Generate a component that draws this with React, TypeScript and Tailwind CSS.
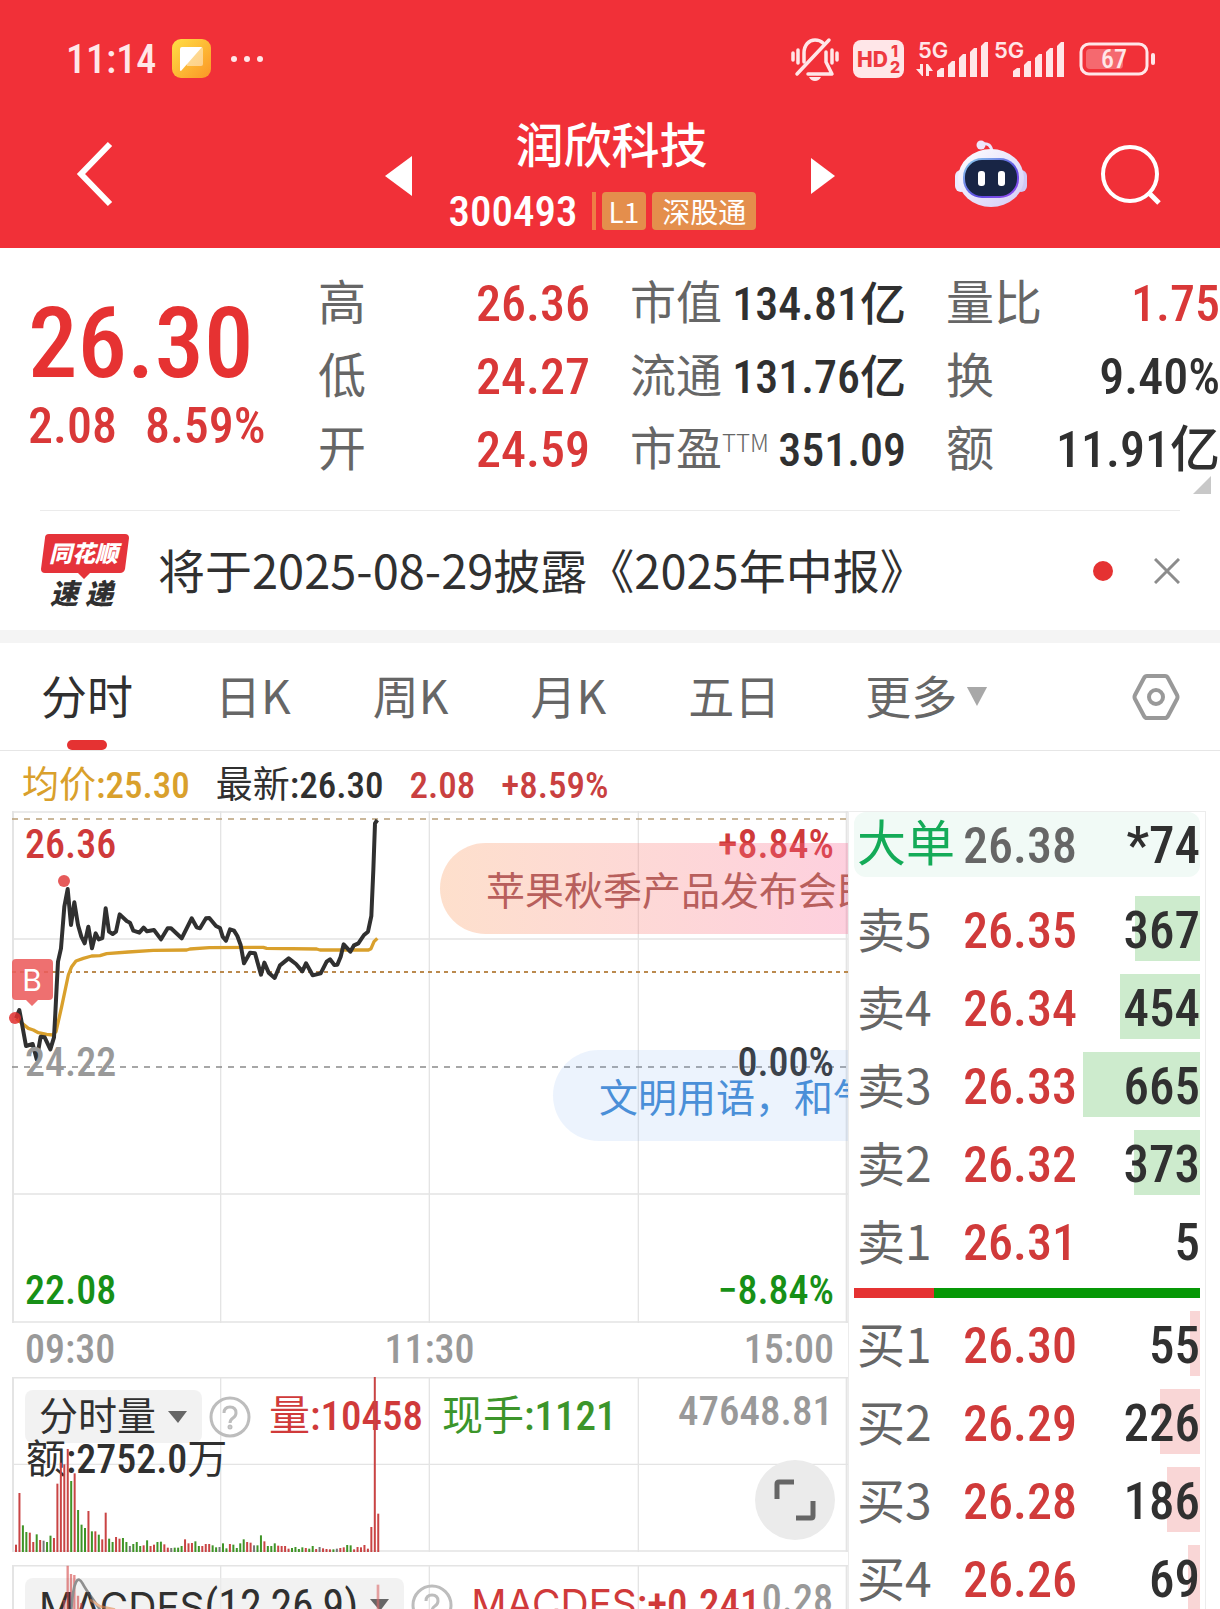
import { useState, type ReactNode } from "react";

type Tone = "red" | "dark";

const QUOTE_LEFT: { label: string; value: string }[] = [
  { label: "高", value: "26.36" },
  { label: "低", value: "24.27" },
  { label: "开", value: "24.59" },
];

const QUOTE_MID: { label: string; sup?: string; value: string }[] = [
  { label: "市值", value: "134.81亿" },
  { label: "流通", value: "131.76亿" },
  { label: "市盈", sup: "TTM", value: "351.09" },
];

const QUOTE_RIGHT: { label: string; value: string; tone: Tone }[] = [
  { label: "量比", value: "1.75", tone: "red" },
  { label: "换", value: "9.40%", tone: "dark" },
  { label: "额", value: "11.91亿", tone: "dark" },
];

const TABS = ["分时", "日K", "周K", "月K", "五日"];

const ASKS = [
  { label: "卖5", price: "26.35", volume: 367 },
  { label: "卖4", price: "26.34", volume: 454 },
  { label: "卖3", price: "26.33", volume: 665 },
  { label: "卖2", price: "26.32", volume: 373 },
  { label: "卖1", price: "26.31", volume: 5 },
];

const BIDS = [
  { label: "买1", price: "26.30", volume: 55 },
  { label: "买2", price: "26.29", volume: 226 },
  { label: "买3", price: "26.28", volume: 186 },
  { label: "买4", price: "26.26", volume: 69 },
];

const MAX_VOLUME = 665;

const PRICE_LINE =
  "48,655 58,630 66,672 78,738 98,732 110,778 122,710 134,712 151,748 162,712 166,640 170,560 174,485 183,445 193,320 203,267 213,375 223,307 234,375 244,410 254,430 265,380 276,445 287,400 296,418 307,414 317,325 327,395 338,402 348,395 359,343 380,363 390,368 400,392 418,398 431,383 441,394 462,390 483,418 503,385 513,385 545,415 575,355 590,382 600,385 618,355 628,354 648,378 660,384 668,410 678,422 690,388 702,392 712,408 722,435 732,490 750,458 765,460 783,524 793,488 806,518 824,534 840,496 866,475 888,492 907,514 918,490 938,526 962,520 980,485 990,478 1003,495 1012,494 1022,470 1031,433 1051,455 1062,436 1075,430 1092,405 1104,395 1114,348 1120,210 1125,70 1132,60";

const AVERAGE_LINE =
  "48,655 85,685 100,690 115,698 140,703 158,705 168,695 185,620 205,525 215,500 228,483 250,475 275,468 300,467 320,461 385,456 460,451 560,450 570,447 628,443 790,442 800,445 950,447 960,450 1105,450 1113,446 1122,425 1132,415";

// altura + direção de cada minuto: r = alta, g = baixa, n = estável
const VOLUME =
  "22r 177r 80g 60g 58r 30r 53g 36r 34n 30g 49g 42r 205r 268r 263r 309r 213g 236r 126g 82g 72g 123r 62g 62r 52g 38r 118r 40g 30g 45r 40r 42g 30g 18n 24g 30g 18g 20r 35g 18r 22r 30g 31g 23r 13r 12n 13g 13g 18g 38r 26r 27r 32g 18g 18r 24r 24r 20g 14g 15n 26g 11g 24r 22g 12g 26g 38g 30r 28r 20n 20g 50g 32r 18g 18g 26g 19r 18r 18r 10r 12g 15g 9g 14g 12r 10g 18g 9r 15n 11r 9r 8r 8g 10n 12r 14r 21g 20g 8r 15r 14r 21r 10r 75r 525r 115r".split(" ");

const BAR_COLORS: Record<string, string> = { r: "#c94444", g: "#3f9427", n: "#777777" };

const NUM = 'font-["Roboto_Condensed","Noto_Sans_CJK_SC",Roboto,sans-serif]';

function StatusBar() {
  return (
    <div className="flex h-[118px] items-center pl-[66px] pr-[64px] text-[#ffe6e8]">
      <span className='pt-[2px] font-["Roboto_Condensed","Noto_Sans_CJK_SC",sans-serif] text-[40px] font-medium leading-none'>
        11:14
      </span>
      <svg className="ml-[16px] h-[40px] w-[40px]" viewBox="0 0 40 40" aria-hidden="true">
        <defs>
          <linearGradient id="note" x1="0" y1="0" x2="1" y2="1">
            <stop offset="0" stopColor="#ffdf45" />
            <stop offset="1" stopColor="#fb9526" />
          </linearGradient>
        </defs>
        <rect width="39" height="39" rx="9" fill="url(#note)" />
        <path d="M10 8h19a2 2 0 0 1 2 2v15a2 2 0 0 1-2 2H15z" fill="#fff" opacity=".45" />
        <path d="M8 10a2 2 0 0 1 2-2h20L9 32q-1 0-1-1z" fill="#fff" />
      </svg>
      <svg className="ml-[18px] h-[8px] w-[34px]" viewBox="0 0 34 8" fill="currentColor" aria-hidden="true">
        <circle cx="4" cy="4" r="3" />
        <circle cx="17" cy="4" r="3" />
        <circle cx="30" cy="4" r="3" />
      </svg>

      <div className="ml-auto flex items-center">
        <svg
          className="h-[46px] w-[48px]"
          viewBox="0 -2 48 46"
          fill="none"
          stroke="currentColor"
          strokeWidth="3.500"
          strokeLinecap="round"
          aria-hidden="true"
        >
          <path d="M2 15v7M7 12v13M41 12v13M46 15v7" />
          <path d="M13 24v-9c0-8 5-13 11-13 3 0 6 1 8 3M35 14v10l6 12H17" strokeLinejoin="round" />
          <path d="M38 2L6 36" />
          <path d="M18 39h12q-2 4-6 4t-6-4z" fill="currentColor" stroke="none" />
        </svg>
        <svg className="ml-[14px] h-[38px] w-[51px]" viewBox="0 0 51 38" aria-hidden="true">
          <rect width="51" height="38" rx="8" fill="currentColor" />
          <g fill="#ee3a41" fontFamily="Inter, sans-serif" fontWeight="800">
            <text x="4" y="27" fontSize="21">HD</text>
            <text x="38" y="17" fontSize="16">1</text>
            <text x="37" y="33" fontSize="16">2</text>
          </g>
        </svg>
        <Signal className="ml-[12px]" transfer />
        <Signal className="ml-[3px]" />
        <svg className="ml-[14px] h-[34px] w-[77px]" viewBox="0 0 77 34" aria-hidden="true">
          <rect x="2" y="2" width="66" height="30" rx="8" fill="none" stroke="currentColor" strokeWidth="3" />
          <rect x="7" y="7" width="37" height="20" rx="4" fill="#fff" opacity=".28" />
          <rect x="72" y="11" width="4" height="12" rx="2" fill="currentColor" />
          <text
            x="35"
            y="26"
            fontSize="26"
            fontWeight="500"
            textAnchor="middle"
            fill="currentColor"
            fontFamily="Roboto Condensed, sans-serif"
          >
            67
          </text>
        </svg>
      </div>
    </div>
  );
}

function Signal({ className, transfer }: { className: string; transfer?: boolean }) {
  return (
    <svg className={`h-[42px] w-[73px] ${className}`} viewBox="0 0 73 42" fill="currentColor" aria-hidden="true">
      <text x="2" y="20" fontSize="22" fontWeight="600" fontFamily="Inter, sans-serif">
        5G
      </text>
      {transfer && <path d="M4 26h3v12H6L0 31h4zM10 26h2l5 7h-4v5h-3z" />}
      <path d="M21 39v-6l4-3h3v9zM32 39V27l4-4h3v16zM43 39V20l4-4h3v23zM54 39V14l4-4h3v29zM65 39V8l4-4h3v35z" />
    </svg>
  );
}

function Robot() {
  return (
    <svg className="h-[70px] w-[74px]" viewBox="0 0 74 70" aria-hidden="true">
      <defs>
        <linearGradient id="shell" x1="0" y1="0" x2="1" y2="1">
          <stop offset="0" stopColor="#ffffff" />
          <stop offset="1" stopColor="#d3cbf7" />
        </linearGradient>
        <linearGradient id="rim" x1="0" y1="0" x2="1" y2="1">
          <stop offset="0" stopColor="#8fd8ef" />
          <stop offset=".6" stopColor="#5b4be0" />
          <stop offset="1" stopColor="#9b4bf0" />
        </linearGradient>
      </defs>
      <path d="M28 5q9-2 10 8" fill="none" stroke="#ebe4fb" strokeWidth="3" />
      <circle cx="27" cy="6" r="4.500" fill="#efe6fb" />
      <rect x="1" y="31" width="12" height="22" rx="6" fill="#eceaff" />
      <rect x="61" y="31" width="12" height="22" rx="6" fill="#cfc8f5" />
      <ellipse cx="37" cy="39" rx="33" ry="29" fill="url(#shell)" />
      <rect x="9" y="19" width="56" height="40" rx="19" fill="url(#rim)" />
      <rect x="11" y="21" width="52" height="36" rx="17" fill="#182545" />
      <rect x="24" y="32" width="7" height="15" rx="3" fill="#fff" />
      <rect x="44" y="32" width="7" height="15" rx="3" fill="#fff" />
    </svg>
  );
}

function TitleBar() {
  return (
    <div className="relative flex h-[130px] items-center justify-between pb-[18px] pl-[74px] pr-[58px] text-white">
      <button type="button" aria-label="返回">
        <svg className="h-[68px] w-[42px]" viewBox="0 0 42 68" fill="none" stroke="currentColor" strokeWidth="6" aria-hidden="true">
          <path d="M36 4L7 34l29 30" />
        </svg>
      </button>

      <div className="absolute inset-x-0 top-0 mx-auto flex w-[450px] justify-between">
        <button type="button" aria-label="上一只" className="mt-[38px] h-[40px]">
          <svg className="h-[40px] w-[27px]" viewBox="0 0 27 40" fill="currentColor" aria-hidden="true">
            <path d="M27 0v40L0 20z" />
          </svg>
        </button>
        <div className="flex flex-col items-center">
          <h1 className='font-["Noto_Sans_CJK_SC",sans-serif] text-[48px] font-medium leading-[48px]'>润欣科技</h1>
          <div className="mr-[18px] mt-[26px] flex h-[38px] items-center">
            <span className={`${NUM} text-[43px] font-medium leading-none`}>300493</span>
            <span className="ml-[14px] h-[38px] w-[4px] bg-[#ef7d45]" />
            <span className='ml-[6px] flex h-[38px] items-center rounded-[4px] bg-[#e48e4c] px-[7px] font-["Noto_Sans_CJK_SC",sans-serif] text-[28px] leading-none'>
              L1
            </span>
            <span className='ml-[6px] flex h-[38px] items-center rounded-[4px] bg-[#e48e4c] px-[10px] font-["Noto_Sans_CJK_SC",sans-serif] text-[28px] leading-none'>
              深股通
            </span>
          </div>
        </div>
        <button type="button" aria-label="下一只" className="mt-[38px] h-[40px]">
          <svg className="h-[40px] w-[24px]" viewBox="0 0 24 40" fill="currentColor" aria-hidden="true">
            <path d="M0 2v36l24-18z" />
          </svg>
        </button>
      </div>

      <div className="relative flex items-center gap-[72px]">
        <button type="button" aria-label="智能助手">
          <Robot />
        </button>
        <button type="button" aria-label="搜索">
          <svg className="h-[62px] w-[62px]" viewBox="0 0 62 62" fill="none" stroke="currentColor" strokeWidth="4" aria-hidden="true">
            <circle cx="30" cy="31" r="27" />
            <path d="M48 49l11 11" strokeWidth="5" />
          </svg>
        </button>
      </div>
    </div>
  );
}

function QuoteSummary() {
  return (
    <section className={`${NUM} relative flex h-[262px] pt-[19px]`}>
      <div className="w-[318px] shrink-0 pl-[28px]">
        <div className="mt-[18px] text-[99px] font-medium leading-[116px] text-[#e63232]">26.30</div>
        <div className="flex gap-[28px] text-[50px] font-medium leading-[50px] text-[#d93838]">
          <span>2.08</span>
          <span>8.59%</span>
        </div>
      </div>

      <dl className="w-[272px] shrink-0">
        {QUOTE_LEFT.map((q) => (
          <div key={q.label} className="flex h-[73px] items-center justify-between leading-none">
            <dt className="text-[48px] text-[#666]">{q.label}</dt>
            <dd className="text-[50px] font-medium text-[#d93838]">{q.value}</dd>
          </div>
        ))}
      </dl>

      <dl className="ml-[40px] w-[276px] shrink-0">
        {QUOTE_MID.map((q) => (
          <div key={q.label} className="flex h-[73px] items-center justify-between whitespace-nowrap leading-none">
            <dt className="flex pb-[2px] text-[46px] text-[#666]">
              {q.label}
              {q.sup && <sup className='top-0 mt-[4px] font-["Noto_Sans_CJK_SC",sans-serif] text-[24px] font-light leading-[24px]'>{q.sup}</sup>}
            </dt>
            <dd className="text-[46px] font-medium text-[#303030]">{q.value}</dd>
          </div>
        ))}
      </dl>

      <dl className="ml-[40px] min-w-0 flex-1">
        {QUOTE_RIGHT.map((q) => (
          <div key={q.label} className="flex h-[73px] items-center justify-between whitespace-nowrap leading-none">
            <dt className="text-[48px] text-[#666]">{q.label}</dt>
            <dd className={`text-[50px] font-medium ${q.tone === "red" ? "text-[#d93838]" : "text-[#303030]"}`}>
              {q.value}
            </dd>
          </div>
        ))}
      </dl>

      <svg className="absolute bottom-[16px] right-[9px] h-[18px] w-[18px]" viewBox="0 0 18 18" aria-hidden="true">
        <path d="M18 0v18H0z" fill="#c8c8c8" />
      </svg>
    </section>
  );
}

function NewsBar() {
  const [open, setOpen] = useState(true);
  if (!open) return null;

  return (
    <div className="mx-[40px] flex h-[120px] items-center border-t border-[#ebebeb]">
      <svg className="h-[84px] w-[90px] shrink-0" viewBox="0 -4 90 84" role="img" aria-label="同花顺速递">
        <path d="M9 1h76q4 0 4 4l-4 31q-1 4-5 4H50l-6 6-6-6H5q-4 0-4-4L5 5q0-4 4-4z" fill="#e5333a" />
        <g fontFamily="Noto Sans CJK SC, sans-serif" fontWeight="900" fontStyle="italic">
          <text x="9" y="29" fontSize="23" fill="#fff">同花顺</text>
          <text x="10" y="71" fontSize="28" fill="#303030">速</text>
          <text x="45" y="71" fontSize="28" fill="#303030">递</text>
        </g>
      </svg>
      <a href="#news" className='ml-[28px] whitespace-nowrap pb-[4px] font-["Noto_Sans_CJK_SC",sans-serif] text-[47px] leading-[64px] text-[#303030]'>
        将于2025-08-29披露《2025年中报》
      </a>
      <span className="ml-auto h-[20px] w-[20px] shrink-0 rounded-full bg-[#e53232]" />
      <button type="button" aria-label="关闭" className="ml-[41px] shrink-0" onClick={() => setOpen(false)}>
        <svg className="h-[26px] w-[26px]" viewBox="0 0 26 26" fill="none" stroke="#8c8c8c" strokeWidth="3" aria-hidden="true">
          <path d="M1 1l24 24M25 1L1 25" />
        </svg>
      </button>
    </div>
  );
}

function PeriodTabs() {
  const [active, setActive] = useState("分时");

  return (
    <nav className='flex h-[108px] items-center border-b border-[#e6e6e6] pl-[41px] pr-[40px] font-["Noto_Sans_CJK_SC",sans-serif] text-[46px] leading-none text-[#666]'>
      <div className="flex h-full gap-[82px]">
        {TABS.map((tab) => (
          <button
            key={tab}
            type="button"
            onClick={() => setActive(tab)}
            className={`relative h-full pb-[6px] ${tab === active ? "text-[#303030]" : ""}`}
          >
            {tab}
            {tab === active && (
              <span className="absolute inset-x-0 bottom-0 mx-auto h-[10px] w-[40px] rounded-full bg-[#e53232]" />
            )}
          </button>
        ))}
        <button type="button" className="flex items-center gap-[9px] pb-[6px] pl-[3px]">
          更多
          <svg className="mt-[4px] h-[20px] w-[22px]" viewBox="0 0 24 20" preserveAspectRatio="none" aria-hidden="true">
            <path d="M1 1h22L12 20z" fill="#a8a8a8" />
          </svg>
        </button>
      </div>
      <button type="button" aria-label="设置" className="ml-auto">
        <svg className="h-[48px] w-[48px]" viewBox="0 0 48 48" fill="none" stroke="#999" strokeWidth="4" strokeLinejoin="round" aria-hidden="true">
          <path d="M15 3h18q2 0 3 2l9 17q1 2 0 4l-9 17q-1 2-3 2H15q-2 0-3-2L3 26q-1-2 0-4l9-17q1-2 3-2z" />
          <circle cx="24" cy="24" r="7" />
        </svg>
      </button>
    </nav>
  );
}

function PriceChart() {
  return (
    <div className="relative h-[512px]">
      <svg className="absolute inset-0 h-full w-full" viewBox="36 33 2508 1536" preserveAspectRatio="none" aria-hidden="true">
        <g fill="none" stroke="#e4e4e4">
          <path d="M36 36h2508M36 417h2508M36 1182h2508M36 1566h2508" strokeWidth="5" />
          <path d="M662 33v1536M1288 33v1536M1915 33v1536" strokeWidth="4" />
          <path d="M39 33v1536M2540 33v1536" strokeWidth="6" />
        </g>
        <path d="M36 57h2508" stroke="#b9a07a" strokeWidth="5" strokeDasharray="18 18" />
        <path d="M36 516h2508" stroke="#bb8a4e" strokeWidth="6" strokeDasharray="12 12" />
        <path d="M36 801h2508" stroke="#8a8a8a" strokeWidth="5" strokeDasharray="18 18" />
        <polyline points={AVERAGE_LINE} fill="none" stroke="#d9a02c" strokeWidth="10" strokeLinejoin="round" />
        <polyline points={PRICE_LINE} fill="none" stroke="#303030" strokeWidth="12" strokeLinejoin="round" />
      </svg>

      <div className={`${NUM} text-[40px] font-medium leading-[40px]`}>
        <span className="absolute left-[13px] top-[14px] text-[#cf3a3a]">26.36</span>
        <span className="absolute right-[14px] top-[14px] text-[#cf3a3a]">+8.84%</span>
        <span className="absolute left-[13px] top-[232px] text-[#999]">24.22</span>
        <span className="absolute right-[14px] top-[232px] text-[#303030]">0.00%</span>
        <span className="absolute bottom-[12px] left-[13px] text-[#179017]">22.08</span>
        <span className="absolute bottom-[12px] right-[14px] text-[#179017]">−8.84%</span>
      </div>

      {/* 买入标记 */}
      <svg className="absolute left-0 top-[60px] h-[156px] w-[60px] overflow-visible" viewBox="0 0 60 156" aria-hidden="true">
        <circle cx="52" cy="10" r="6" fill="#e65a5a" />
        <circle cx="3" cy="147" r="6" fill="#e02f2f" opacity=".85" />
        <path d="M0 92q0-4 4-4h33q4 0 4 4v33q0 4-4 4H26l-6 6-6-6H4q-4 0-4-4z" fill="#ec5c5c" opacity=".88" />
        <text x="20" y="120" fontSize="30" textAnchor="middle" fill="#fff" fontFamily="Inter, sans-serif">
          B
        </text>
      </svg>

      {/* 弹幕 */}
      <div className='absolute right-0 top-[32px] flex h-[91px] w-[408px] items-center overflow-hidden whitespace-nowrap rounded-l-full bg-linear-to-r from-[#fa9655]/30 to-[#fa6291]/30 pl-[46px] font-["Noto_Sans_CJK_SC",sans-serif] text-[39px] leading-none text-[#b85f5c]'>
        苹果秋季产品发布会即
      </div>
      <div className='absolute right-0 top-[239px] flex h-[91px] w-[295px] items-center overflow-hidden whitespace-nowrap rounded-l-full bg-[#80aff0]/15 pl-[46px] font-["Noto_Sans_CJK_SC",sans-serif] text-[39px] leading-none text-[#4a8fd8]'>
        文明用语，和气
      </div>
    </div>
  );
}

function HelpIcon() {
  return (
    <svg className="h-[42px] w-[42px] shrink-0" viewBox="0 0 42 42" fill="none" stroke="#bdbdbd" strokeWidth="3" aria-hidden="true">
      <circle cx="21" cy="21" r="19" />
      <path d="M15 17q0-6 6-6t6 6q0 3-3 5t-3 5" />
      <circle cx="21" cy="31" r="1" />
    </svg>
  );
}

function IndicatorButton({ children }: { children: ReactNode }) {
  return (
    <button
      type="button"
      className="flex h-[53px] items-center gap-[12px] rounded-[8px] bg-[#ececec]/70 pl-[14px] pr-[15px] text-[39px] leading-none text-[#303030]"
    >
      <span className="whitespace-nowrap pt-[2px]">{children}</span>
      <svg className="h-[12px] w-[19px]" viewBox="0 0 19 12" aria-hidden="true">
        <path d="M0 0h19l-9 12z" fill="#666" />
      </svg>
    </button>
  );
}

function VolumeChart() {
  return (
    <div className={`${NUM} relative h-[175px]`}>
      <svg className="absolute inset-0 h-full w-full" viewBox="36 411 2508 525" preserveAspectRatio="none" aria-hidden="true">
        <g fill="none" stroke="#e4e4e4">
          <path d="M36 413h2508M36 933h2508" strokeWidth="5" />
          <path d="M662 411v525M1288 411v525M1915 411v525M36 673h2508" strokeWidth="4" />
          <path d="M39 411v525M2540 411v525" strokeWidth="6" />
        </g>
      </svg>

      <div className="relative flex items-center pl-[13px] pr-[15px] pt-[13px]">
        <IndicatorButton>分时量</IndicatorButton>
        <div className="ml-[7px] flex">
          <HelpIcon />
        </div>
        <span className="ml-[18px] text-[41px] font-medium leading-none text-[#d03a3a]">
          <span className="font-normal">量</span>:10458
        </span>
        <span className="ml-[19px] text-[41px] font-medium leading-none text-[#3c952a]">
          <span className="font-normal">现手</span>:1121
        </span>
        <span className="mb-[10px] ml-auto text-[41px] font-medium leading-none text-[#999]">47648.81</span>
      </div>
      <div className="relative pl-[14px] text-[40px] leading-[34px] text-[#303030]">
        额<span className="font-medium">:2752.0</span>万
      </div>

      <svg className="absolute inset-0 h-full w-full" viewBox="36 411 2508 525" preserveAspectRatio="none" aria-hidden="true">
        {VOLUME.map((bar, i) => {
          const height = parseInt(bar, 10);
          return (
            <rect key={i} x={45 + i * 10.35} y={936 - height} width="6" height={height} fill={BAR_COLORS[bar.slice(-1)]} />
          );
        })}
      </svg>

      <button
        type="button"
        aria-label="全屏"
        className="absolute bottom-[12px] right-[13px] flex h-[80px] w-[80px] items-center justify-center rounded-full bg-[#ebebeb]"
      >
        <svg className="h-[42px] w-[42px]" viewBox="0 0 42 42" fill="none" stroke="#666" strokeWidth="5" aria-hidden="true">
          <path d="M3 20V5q0-2 2-2h15M39 22v15q0 2-2 2H22" />
        </svg>
      </button>
    </div>
  );
}

function MacdChart() {
  return (
    <div className={`${NUM} relative mt-[13px] h-[175px]`}>
      <svg className="absolute inset-0 h-full w-full" viewBox="36 976 2508 525" preserveAspectRatio="none" fill="none" aria-hidden="true">
        <g stroke="#e4e4e4">
          <path d="M36 978h2508" strokeWidth="5" />
          <path d="M662 976v525M1288 976v525M1915 976v525" strokeWidth="4" />
          <path d="M39 976v525M2540 976v525" strokeWidth="6" />
        </g>
      </svg>
      <div className="relative flex items-center pl-[13px] pr-[15px] pt-[13px]">
        <IndicatorButton>
          <span className="font-[Inter,sans-serif] text-[39px]">MACDFS</span>
          <span className="text-[44px]">(12,26,9)</span>
        </IndicatorButton>
        <div className="ml-[7px] flex">
          <HelpIcon />
        </div>
        <span className="ml-[18px] whitespace-nowrap text-[41px] font-medium leading-none text-[#d03a3a]">
          <span className="font-[Inter,sans-serif] text-[39px] font-normal">MACDFS</span>:+0.241
        </span>
        <span className="mb-[10px] ml-auto text-[40px] font-medium leading-none text-[#999]">0.28</span>
      </div>
      <svg className="absolute inset-0 h-full w-full opacity-60" viewBox="36 976 2508 525" preserveAspectRatio="none" fill="none" aria-hidden="true">
        <path d="M193 1501v-420M203 1501V978M213 1501V1003M223 1501V1006M234 1501V1068M244 1501V1090" stroke="#d44545" strokeWidth="7" />
        <path d="M1134 1035v120" stroke="#dc6a6a" strokeWidth="8" />
        <path d="M214 1110C220 1020 234 1005 248 1032S278 1075 300 1110" stroke="#4f4f4f" strokeWidth="8" />
        <path d="M270 1080l30 20 45 10" stroke="#e08a50" strokeWidth="8" />
      </svg>
    </div>
  );
}

// ordens pequenas demais não ganham barra
function depthWidth(volume: number) {
  const pct = (volume / MAX_VOLUME) * 100;
  return pct < 1 ? 0 : pct;
}

function DepthTable({ rows, side }: { rows: typeof ASKS; side: "ask" | "bid" }) {
  return (
    <table className="w-full table-fixed border-collapse leading-none" aria-label={side === "ask" ? "卖盘" : "买盘"}>
      <tbody>
        {rows.map((row) => (
          <tr key={row.label} className="h-[78px]">
            <th scope="row" className='w-[109px] p-0 pl-[3px] pt-[9px] text-left font-["Noto_Sans_CJK_SC",sans-serif] text-[48px] font-normal text-[#666]'>
              {row.label}
            </th>
            <td className="p-0 pt-[17px] text-[50px] font-medium text-[#d03a3a]">{row.price}</td>
            <td className="w-[117px] p-0 pt-[13px]">
              <div className="relative flex h-[65px] items-center justify-end pt-[4px] text-[51px] font-medium text-[#303030]">
                <span
                  className={`absolute inset-y-0 right-0 ${side === "ask" ? "bg-[#cdebcd]" : "bg-[#f9d6d6]"}`}
                  style={{ width: `${depthWidth(row.volume)}%` }}
                />
                <span className="relative">{row.volume}</span>
              </div>
            </td>
          </tr>
        ))}
      </tbody>
    </table>
  );
}

function OrderBook() {
  return (
    <aside className={`${NUM} w-[358px] shrink-0 border border-b-0 border-[#ececec] pl-[5px] pr-[5px]`}>
      <div className="flex h-[65px] items-center rounded-[12px] bg-[#f1faf6] pl-[3px] leading-none">
        <span className="w-[106px] text-[49px] text-[#14ab58]">大单</span>
        <span className="pt-[2px] text-[50px] font-medium text-[#666]">26.38</span>
        <span className="ml-auto pt-[2px] text-[51px] font-medium text-[#303030]">*74</span>
      </div>
      <div className="mt-[6px]">
        <DepthTable rows={ASKS} side="ask" />
      </div>
      <div className="mt-[15px] flex h-[10px] bg-[#069806]">
        <span className="w-[23%] bg-[#e53232]" />
      </div>
      <DepthTable rows={BIDS} side="bid" />
    </aside>
  );
}

export default function App() {
  return (
    <div className="flex h-screen flex-col overflow-hidden bg-white">
      <header className="shrink-0 bg-[#f13038]">
        <StatusBar />
        <TitleBar />
      </header>

      <main className="flex min-h-0 flex-1 flex-col">
        <QuoteSummary />
        <NewsBar />
        <div className="h-[13px] shrink-0 bg-[#f4f4f4]" />
        <PeriodTabs />

        <div className={`${NUM} flex h-[60px] shrink-0 items-center gap-[26px] pl-[22px] pt-[8px] text-[37px] font-medium leading-none text-[#303030]`}>
          <span className="text-[#d9a02c]">
            <span className="font-normal">均价</span>:25.30
          </span>
          <span>
            <span className="font-normal">最新</span>:26.30
          </span>
          <span className="text-[#c94040]">2.08</span>
          <span className="text-[#c94040]">+8.59%</span>
        </div>

        <div className="flex min-h-0 flex-1 pl-[12px] pr-[14px]">
          <div className="min-w-0 flex-1">
            <PriceChart />
            <div className={`${NUM} flex h-[54px] items-center justify-between pl-[13px] pr-[14px] text-[40px] font-medium leading-none text-[#999]`}>
              <span>09:30</span>
              <span>11:30</span>
              <span>15:00</span>
            </div>
            <VolumeChart />
            <MacdChart />
          </div>
          <OrderBook />
        </div>
      </main>
    </div>
  );
}
